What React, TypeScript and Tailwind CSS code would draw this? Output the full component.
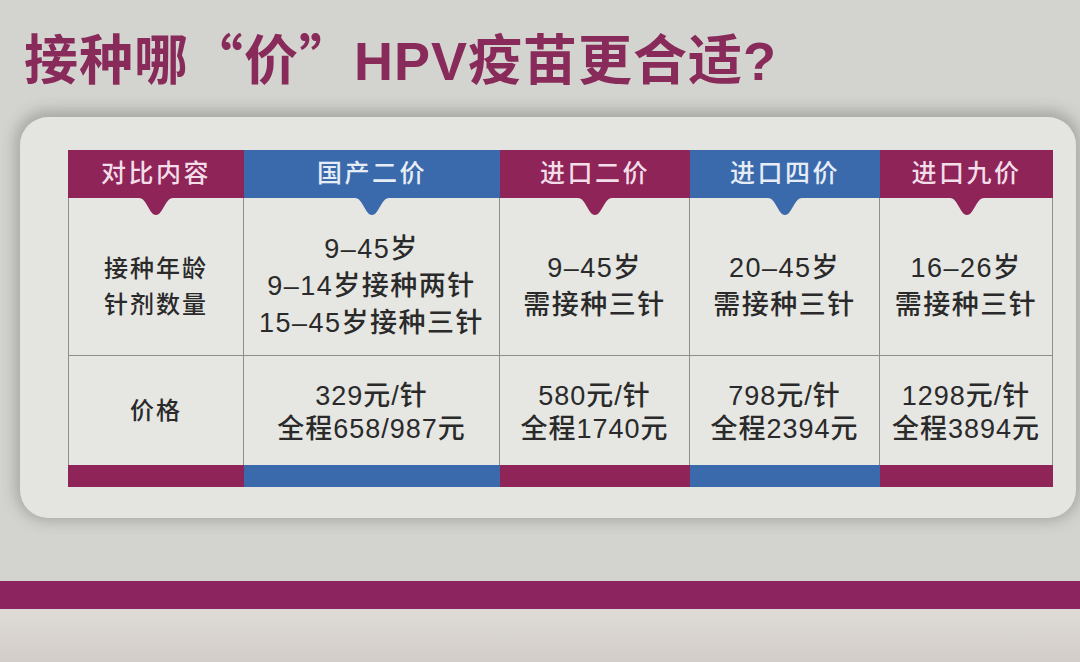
const MAGENTA = "bg-[#8e2457]";
const BLUE = "bg-[#3a6aab]";

type Col = { title: string; tone: "m" | "b"; ages: string[]; price: string[] };

const cols: Col[] = [
  { title: "国产二价", tone: "b", ages: ["9–45岁", "9–14岁接种两针", "15–45岁接种三针"], price: ["329元/针", "全程658/987元"] },
  { title: "进口二价", tone: "m", ages: ["9–45岁", "需接种三针"], price: ["580元/针", "全程1740元"] },
  { title: "进口四价", tone: "b", ages: ["20–45岁", "需接种三针"], price: ["798元/针", "全程2394元"] },
  { title: "进口九价", tone: "m", ages: ["16–26岁", "需接种三针"], price: ["1298元/针", "全程3894元"] },
];

function Notch({ color }: { color: string }) {
  return (
    <svg
      width="34"
      height="18"
      viewBox="0 0 34 18"
      className="absolute left-1/2 top-full -translate-x-1/2 z-10"
    >
      <path d="M0 0 H34 C26 0 24 17 17 17 C10 17 8 0 0 0 Z" fill={color} />
    </svg>
  );
}

function HeaderCell({ label, tone }: { label: string; tone: "m" | "b" }) {
  return (
    <div
      className={`relative flex items-center justify-center text-[25px] font-medium tracking-[2.5px] ${
        tone === "m" ? `${MAGENTA} text-[#f2dde8]` : `${BLUE} text-[#e7edf6]`
      }`}
    >
      {label}
      <Notch color={tone === "m" ? "#8e2457" : "#3a6aab"} />
    </div>
  );
}

export default function App() {
  return (
    <div className="w-[1080px] h-[662px] overflow-hidden flex flex-col bg-[#d3d3cf] font-['Liberation_Sans','Noto_Sans_CJK_SC',sans-serif]">
      <h1 className="pl-6 pt-[30px] text-[54px] leading-none font-bold tracking-[1px] text-[#892b5a] whitespace-nowrap">
        接种哪<span className="font-['Noto_Sans_CJK_SC',sans-serif]">“</span>价
        <span className="font-['Noto_Sans_CJK_SC',sans-serif]">”</span>HPV疫苗更合适?
      </h1>

      <div className="mt-[29px] ml-5 mr-1 rounded-[28px] bg-[#e4e4e1] pt-[33px] pl-12 pb-[31px] shadow-[0_-2px_14px_5px_rgba(70,70,70,0.3)]">
        <div className="grid grid-cols-[176px_256px_190px_190px_173px] grid-rows-[48px_158px_109px_22px] text-[#2a2a2a] font-medium">
          <HeaderCell label="对比内容" tone="m" />
          {cols.map((c) => (
            <HeaderCell key={c.title} label={c.title} tone={c.tone} />
          ))}

          <div className="flex flex-col items-center justify-center pt-5 border-l border-r border-b border-[#8e8e8c] bg-[#e6e6e3] text-[24px] leading-[36px] tracking-[2px]">
            <span>接种年龄</span>
            <span>针剂数量</span>
          </div>
          {cols.map((c) => (
            <div
              key={c.title + "-age"}
              className="flex flex-col items-center justify-center pt-5 border-r border-b border-[#8e8e8c] bg-[#e6e6e3] text-[27px] leading-[37px] tracking-[1.5px] whitespace-nowrap"
            >
              {c.ages.map((l) => (
                <span key={l}>{l}</span>
              ))}
            </div>
          ))}

          <div className="flex items-center justify-center border-l border-r border-[#8e8e8c] bg-[#e6e6e3] text-[24px] tracking-[2px]">
            价格
          </div>
          {cols.map((c) => (
            <div
              key={c.title + "-price"}
              className="flex flex-col items-center justify-center pt-1 border-r border-[#8e8e8c] bg-[#e6e6e3] text-[27px] leading-[33px] tracking-[1px] whitespace-nowrap"
            >
              {c.price.map((l) => (
                <span key={l}>{l}</span>
              ))}
            </div>
          ))}

          <div className={MAGENTA} />
          {cols.map((c) => (
            <div key={c.title + "-bar"} className={c.tone === "m" ? MAGENTA : BLUE} />
          ))}
        </div>
      </div>

      <div className="mt-[63px] h-7 bg-[#8c2460]" />
      <div className="flex-1 bg-gradient-to-b from-[#dfdbd7] to-[#d2cdc8]" />
    </div>
  );
}
